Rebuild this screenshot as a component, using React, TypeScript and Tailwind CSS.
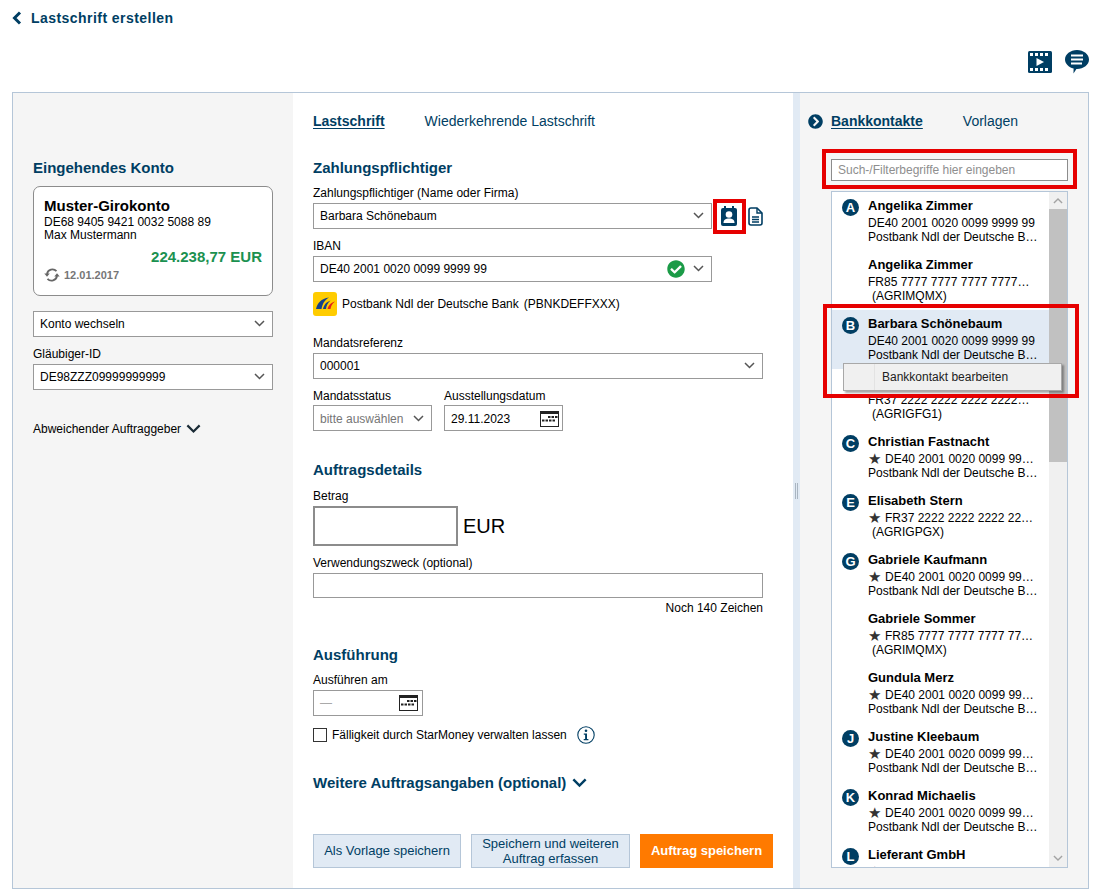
import React from "react";
import { FaChevronCircleRight, FaCheckCircle } from "react-icons/fa";

const NAVY = "#003e63";

function Chevron({ size = 11, color = "#555", width = 1.5 }: { size?: number; color?: string; width?: number }) {
  return (
    <svg width={size} height={size * 0.64} viewBox="0 0 11 7" fill="none">
      <path d="M1 1l4.5 4.5L10 1" stroke={color} strokeWidth={width} />
    </svg>
  );
}

function BackIcon() {
  return (
    <svg width="10" height="14" viewBox="0 0 10 14" fill="none">
      <path d="M8 1.500L2.500 7 8 12.500" stroke={NAVY} strokeWidth="3" />
    </svg>
  );
}

function SyncIcon() {
  return (
    <svg width="16" height="14" viewBox="0 0 16 14" fill="none">
      <path d="M12.500 3.200A5.500 5.500 0 0 0 3 6" stroke="#666" strokeWidth="1.800" />
      <path d="M0.300 5.500h5.400L3 8.700z" fill="#666" />
      <path d="M3.500 10.800A5.500 5.500 0 0 0 13 8" stroke="#666" strokeWidth="1.800" />
      <path d="M10.300 8.500h5.400L13 5.300z" fill="#666" />
    </svg>
  );
}

function CalendarIcon() {
  return (
    <svg width="19" height="16" viewBox="0 0 19 16">
      <rect x="0.5" y="0.5" width="18" height="15" fill="#fff" stroke="#222" />
      <rect x="0" y="0" width="19" height="3" fill="#222" />
      <g fill="#222">
        <rect x="8" y="5" width="2.5" height="2" />
        <rect x="11.5" y="5" width="2.5" height="2" />
        <rect x="15" y="5" width="2.5" height="2" />
        <rect x="2" y="8.5" width="2.5" height="2" />
        <rect x="5.5" y="8.5" width="2.5" height="2" />
        <rect x="9" y="8.5" width="2.5" height="2" />
        <rect x="12.5" y="8.5" width="2.5" height="2" />
      </g>
    </svg>
  );
}

function FilmIcon() {
  return (
    <svg width="24" height="22" viewBox="0 0 24 22">
      <rect width="24" height="22" rx="1.5" fill={NAVY} />
      <g fill="#fff">
        <rect x="2" y="2" width="3" height="3" />
        <rect x="7" y="2" width="3" height="3" />
        <rect x="12" y="2" width="3" height="3" />
        <rect x="17" y="2" width="3" height="3" />
        <rect x="2" y="17" width="3" height="3" />
        <rect x="7" y="17" width="3" height="3" />
        <rect x="12" y="17" width="3" height="3" />
        <rect x="17" y="17" width="3" height="3" />
        <path d="M8.500 7l7.500 4-7.500 4z" />
      </g>
    </svg>
  );
}

function ChatIcon() {
  return (
    <svg width="24" height="24" viewBox="0 0 24 24">
      <path d="M12 0c6.600 0 12 4.300 12 9.500S18.600 19 12 19h-.6L8.500 23.500 8.600 18.500C3.600 17.200 0 13.700 0 9.500 0 4.300 5.400 0 12 0z" fill={NAVY} />
      <g fill="#fff">
        <rect x="6" y="4.500" width="12" height="2" />
        <rect x="6" y="8.500" width="12" height="2" />
        <rect x="6" y="12.500" width="11" height="2" />
      </g>
    </svg>
  );
}

function ContactIcon() {
  return (
    <svg width="16" height="20" viewBox="0 0 16 20">
      <rect x="3" y="0" width="2" height="4" fill={NAVY} />
      <rect x="11" y="0" width="2" height="4" fill={NAVY} />
      <rect x="0" y="2" width="16" height="18" rx="2" fill={NAVY} />
      <circle cx="8" cy="8.500" r="3.300" fill="#fff" />
      <path d="M2.500 17c0-3.400 2.500-4.500 5.500-4.500s5.500 1.100 5.500 4.500z" fill="#fff" />
    </svg>
  );
}

function DocIcon() {
  return (
    <svg width="15" height="19" viewBox="0 0 15 19" fill="none">
      <path d="M1 3a2 2 0 012-2h6l5 5v10a2 2 0 01-2 2H3a2 2 0 01-2-2z" stroke={NAVY} strokeWidth="1.600" />
      <path d="M9 1v5h5" stroke={NAVY} strokeWidth="1.400" />
      <path d="M4 10h7M4 12.500h7M4 15h7" stroke={NAVY} strokeWidth="1.300" />
    </svg>
  );
}

function InfoIcon() {
  return (
    <svg width="18" height="18" viewBox="0 0 18 18" fill="none">
      <circle cx="9" cy="9" r="8.200" stroke={NAVY} strokeWidth="1.100" />
      <circle cx="9" cy="4.800" r="1.300" fill={NAVY} />
      <path d="M6.800 7.500H10v5.500h1.400v1.200H6.700V13h1.400V8.700H6.800z" fill={NAVY} />
    </svg>
  );
}

function BankLogo() {
  return (
    <svg width="24" height="24" viewBox="0 0 24 24">
      <rect width="24" height="24" rx="3" fill="#ffcc00" />
      <path d="M3 17C4.500 11 8 6.500 16 5.500 11.500 8 9.500 12 8.500 17z" fill="#14418b" />
      <path d="M10 17C11 13 13 10 17.500 8.500 14.500 11 13.500 13.500 13 17z" fill="#14418b" />
      <path d="M14.500 17C15.500 13.500 17.500 11 22 9.500 19 12 18 14 17.500 17z" fill="#e2231a" />
    </svg>
  );
}

function Field({ className = "", children }: { className?: string; children: React.ReactNode }) {
  return (
    <div className={`flex items-center h-[26px] border border-[#999] bg-white pl-[6px] pr-[6px] text-[12px] text-black ${className}`}>
      {children}
    </div>
  );
}

function Select({ className = "", value, muted = false, extra }: { className?: string; value: string; muted?: boolean; extra?: React.ReactNode }) {
  return (
    <Field className={className}>
      <span className={`flex-1 whitespace-nowrap ${muted ? "text-[#767676]" : ""}`}>{value}</span>
      {extra}
      <span className="ml-[8px] mr-[1px] flex">
        <Chevron />
      </span>
    </Field>
  );
}

function Label({ children, className = "" }: { children: React.ReactNode; className?: string }) {
  return <div className={`h-[14px] leading-[14px] text-[12px] text-black whitespace-nowrap ${className}`}>{children}</div>;
}

function Heading({ children, className = "" }: { children: React.ReactNode; className?: string }) {
  return <div className={`h-[18px] leading-[18px] text-[15px] font-bold text-[#003e63] whitespace-nowrap ${className}`}>{children}</div>;
}

type Row = { letter?: string; name: string; l2: string; l3: string; star?: boolean; sel?: boolean; indent?: boolean };

const PB = "Postbank Ndl der Deutsche B…";
const rows: Row[] = [
  { letter: "A", name: "Angelika Zimmer", l2: "DE40 2001 0020 0099 9999 99", l3: PB },
  { name: "Angelika Zimmer", l2: "FR85 7777 7777 7777 7777…", l3: "(AGRIMQMX)", indent: true },
  { letter: "B", name: "Barbara Schönebaum", l2: "DE40 2001 0020 0099 9999 99", l3: PB, sel: true },
  { name: "\u00a0", l2: "FR37 2222 2222 2222 2222…", l3: "(AGRIGFG1)", indent: true },
  { letter: "C", name: "Christian Fastnacht", l2: "DE40 2001 0020 0099 99…", l3: PB, star: true },
  { letter: "E", name: "Elisabeth Stern", l2: "FR37 2222 2222 2222 22…", l3: "(AGRIGPGX)", star: true, indent: true },
  { letter: "G", name: "Gabriele Kaufmann", l2: "DE40 2001 0020 0099 99…", l3: PB, star: true },
  { name: "Gabriele Sommer", l2: "FR85 7777 7777 7777 77…", l3: "(AGRIMQMX)", star: true, indent: true },
  { name: "Gundula Merz", l2: "DE40 2001 0020 0099 99…", l3: PB, star: true },
  { letter: "J", name: "Justine Kleebaum", l2: "DE40 2001 0020 0099 99…", l3: PB, star: true },
  { letter: "K", name: "Konrad Michaelis", l2: "DE40 2001 0020 0099 99…", l3: PB, star: true },
  { letter: "L", name: "Lieferant GmbH", l2: "", l3: "", star: true },
];

function ContactRow({ r }: { r: Row }) {
  return (
    <div className={`relative h-[59px] shrink-0 pl-[36px] pt-[6px] ${r.sel ? "bg-[#e1eaf4]" : "bg-white"}`}>
      {r.letter && (
        <div className="absolute left-[10px] top-[7px] w-[17px] h-[17px] rounded-full bg-[#003e63] flex items-center justify-center text-white text-[13px] font-bold leading-none">
          {r.letter}
        </div>
      )}
      <div className="h-[16px] leading-[16px] text-[13px] font-bold text-black whitespace-nowrap">{r.name}</div>
      <div className="mt-[3px] h-[13px] leading-[13px] text-[12px] text-black whitespace-nowrap overflow-visible">
        {r.star && <span className="inline-block h-[13px] align-top text-[#333] text-[15px] leading-[12px] mr-[4px]">★</span>}
        {r.l2}
      </div>
      <div className={`h-[14px] leading-[14px] text-[12px] text-black whitespace-nowrap ${r.indent ? "pl-[4px]" : ""}`}>{r.l3}</div>
    </div>
  );
}

export default function App() {
  return (
    <div className="relative w-[1095px] h-[895px] overflow-hidden bg-white font-['Liberation_Sans',Arial,sans-serif]">
      {/* Header */}
      <div className="flex items-center h-[36px] pl-[12px] gap-[9px]">
        <BackIcon />
        <span className="text-[14px] font-bold text-[#003e63] tracking-[0.45px]">Lastschrift erstellen</span>
      </div>
      <div className="flex justify-end items-center h-[56px] pr-[6px] gap-[13px] pb-[4px]">
        <FilmIcon />
        <ChatIcon />
      </div>

      {/* Panel */}
      <div className="ml-[12px] w-[1077px] h-[797px] border border-[#b5c6d8] flex">
        {/* Left */}
        <div className="w-[280px] shrink-0 bg-[#f5f5f5] pl-[20px] pr-[20px] pt-[66px]">
          <Heading>Eingehendes Konto</Heading>
          <div className="mt-[9px] h-[110px] rounded-[7px] border border-[#8c8c8c] bg-white pl-[10px] pr-[10px] pt-[10px]">
            <div className="h-[18px] leading-[18px] text-[15px] font-bold text-black">Muster-Girokonto</div>
            <div className="h-[14px] leading-[14px] text-[12px] text-black">DE68 9405 9421 0032 5088 89</div>
            <div className="h-[13px] leading-[13px] text-[12px] text-black">Max Mustermann</div>
            <div className="mt-[6px] h-[18px] leading-[18px] text-[15px] font-bold text-[#1b9150] text-right">224.238,77 EUR</div>
            <div className="mt-[1px] flex items-center gap-[4px] text-[11px] font-bold text-[#767676]">
              <SyncIcon />
              <span>12.01.2017</span>
            </div>
          </div>
          <Select className="mt-[15px]" value="Konto wechseln" />
          <Label className="mt-[10px]">Gläubiger-ID</Label>
          <Select className="mt-[3px]" value="DE98ZZZ09999999999" />
          <div className="mt-[31px] flex items-center gap-[5px] text-[12px] text-black h-[16px]">
            <span>Abweichender Auftraggeber</span>
            <Chevron size={15} color="#1a2b36" width={1.600} />
          </div>
        </div>

        {/* Center */}
        <div className="w-[500px] shrink-0 bg-white pl-[20px] pr-[20px]">
          <div className="mt-[19px] h-[18px] leading-[18px] flex gap-[40px] text-[14px]">
            <span className="font-bold text-[#003e63] underline underline-offset-[2px]">Lastschrift</span>
            <span className="text-[#003e63]">Wiederkehrende Lastschrift</span>
          </div>
          <Heading className="mt-[29px]">Zahlungspflichtiger</Heading>
          <Label className="mt-[9px]">Zahlungspflichtiger (Name oder Firma)</Label>
          <div className="mt-[3px] flex items-center">
            <Select className="w-[399px]" value="Barbara Schönebaum" />
            <span className="ml-[9px] flex"><ContactIcon /></span>
            <span className="ml-[11px] flex"><DocIcon /></span>
          </div>
          <Label className="mt-[10px]">IBAN</Label>
          <Select
            className="mt-[3px] w-[399px]"
            value="DE40 2001 0020 0099 9999 99"
            extra={<FaCheckCircle size={18} color="#1b9b47" />}
          />
          <div className="mt-[10px] flex items-center h-[24px] text-[12px] text-black">
            <BankLogo />
            <span className="ml-[5px]">Postbank Ndl der Deutsche Bank</span>
            <span className="ml-[5px]">(PBNKDEFFXXX)</span>
          </div>
          <Label className="mt-[20px]">Mandatsreferenz</Label>
          <Select className="mt-[3px] w-[450px]" value="000001" />
          <div className="mt-[10px] flex gap-[12px]">
            <div>
              <Label>Mandatsstatus</Label>
              <Select className="mt-[2px] w-[119px] pt-[1px]" value="bitte auswählen" muted />
            </div>
            <div>
              <Label>Ausstellungsdatum</Label>
              <Field className="mt-[2px] w-[119px] justify-between !pr-[3px] pt-[1px]">
                <span>29.11.2023</span>
                <CalendarIcon />
              </Field>
            </div>
          </div>
          <Heading className="mt-[30px]">Auftragsdetails</Heading>
          <Label className="mt-[10px]">Betrag</Label>
          <div className="mt-[3px] flex items-center">
            <div className="w-[145px] h-[40px] border-2 border-[#8c8c8c] bg-white" />
            <span className="ml-[5px] text-[20px] text-black">EUR</span>
          </div>
          <Label className="mt-[10px]">Verwendungszweck (optional)</Label>
          <div className="mt-[3px] w-[450px] h-[25px] border border-[#999] bg-white" />
          <div className="mt-[3px] w-[450px] h-[14px] leading-[14px] text-[12px] text-black text-right">Noch 140 Zeichen</div>
          <Heading className="mt-[31px]">Ausführung</Heading>
          <Label className="mt-[9px]">Ausführen am</Label>
          <Field className="mt-[3px] w-[110px] justify-between !pr-[4px]">
            <span className="text-[#aaa]">—</span>
            <CalendarIcon />
          </Field>
          <div className="mt-[10px] flex items-center h-[18px]">
            <div className="w-[14px] h-[14px] border border-[#333] bg-white" />
            <span className="ml-[5px] text-[12px] text-black">Fälligkeit durch StarMoney verwalten lassen</span>
            <span className="ml-[10px] flex"><InfoIcon /></span>
          </div>
          <div className="mt-[30px] flex items-center gap-[6px] h-[18px]">
            <span className="text-[15px] font-bold text-[#003e63] whitespace-nowrap">Weitere Auftragsangaben (optional)</span>
            <Chevron size={15} color={NAVY} width={1.800} />
          </div>
          <div className="mt-[42px] flex w-[460px]">
            <div className="w-[148px] h-[34px] border border-[#b5c6d8] bg-[#e1eaf4] flex items-center justify-center text-[13px] text-[#003e63]">
              Als Vorlage speichern
            </div>
            <div className="ml-[10px] w-[159px] h-[34px] border border-[#b5c6d8] bg-[#e1eaf4] flex items-center justify-center text-center text-[13px] leading-[15px] text-[#003e63]">
              Speichern und weiteren
              <br />
              Auftrag erfassen
            </div>
            <div className="ml-[10px] w-[133px] h-[34px] shrink-0 bg-[#ff7a00] flex items-center justify-center text-[13px] font-bold text-white">
              Auftrag speichern
            </div>
          </div>
        </div>

        {/* Divider */}
        <div className="w-[7px] shrink-0 bg-[#e1eaf4] flex items-center justify-center">
          <div className="w-[3px] h-[16px] border-x border-[#a9b5c1]" />
        </div>

        {/* Right */}
        <div className="flex-1 bg-[#f5f5f5] pl-[31px] pr-[20px]">
          <div className="-ml-[23px] mt-[19px] h-[18px] leading-[18px] flex items-center text-[14px]">
            <FaChevronCircleRight size={15} color={NAVY} />
            <span className="ml-[8px] font-bold text-[#003e63] underline underline-offset-[2px]">Bankkontakte</span>
            <span className="ml-[40px] text-[#003e63]">Vorlagen</span>
          </div>
          <div className="mt-[29px] w-[237px] h-[22px] border border-[#8c8c8c] bg-white flex items-center pl-[6px] text-[12px] text-[#8e8e8e]">
            Such-/Filterbegriffe hier eingeben
          </div>
          <div className="mt-[10px] w-[237px] h-[677px] border border-[#b5c6d8] bg-white flex overflow-hidden">
            <div className="flex-1 flex flex-col overflow-hidden">
              {rows.map((r, i) => (
                <ContactRow key={i} r={r} />
              ))}
            </div>
            <div className="w-[18px] shrink-0 bg-[#f0f0f0] flex flex-col">
              <div className="h-[17px] flex items-center justify-center rotate-180">
                <Chevron size={10} color="#a3a3a3" />
              </div>
              <div className="h-[253px] bg-[#c1c1c1]" />
              <div className="flex-1" />
              <div className="h-[17px] flex items-center justify-center">
                <Chevron size={10} color="#a3a3a3" />
              </div>
            </div>
          </div>
        </div>
      </div>

      {/* Context menu */}
      <div className="absolute left-[843px] top-[363px] w-[219px] h-[28px] border border-[#a8a8a8] bg-[#f0f0f0] shadow-[2px_2px_2px_rgba(0,0,0,0.35)] flex items-center">
        <div className="w-[31px] h-full border-r border-[#e3e3e3]" />
        <span className="ml-[7px] text-[12px] text-[#222]">Bankkontakt bearbeiten</span>
      </div>

      {/* Red annotation boxes */}
      <div className="absolute left-[713px] top-[199px] w-[33px] h-[35px] border-[4px] border-[#e60000]" />
      <div className="absolute left-[822px] top-[149px] w-[255px] h-[40px] border-[4px] border-[#e60000]" />
      <div className="absolute left-[823px] top-[304px] w-[256px] h-[94px] border-[4px] border-[#e60000]" />
    </div>
  );
}
